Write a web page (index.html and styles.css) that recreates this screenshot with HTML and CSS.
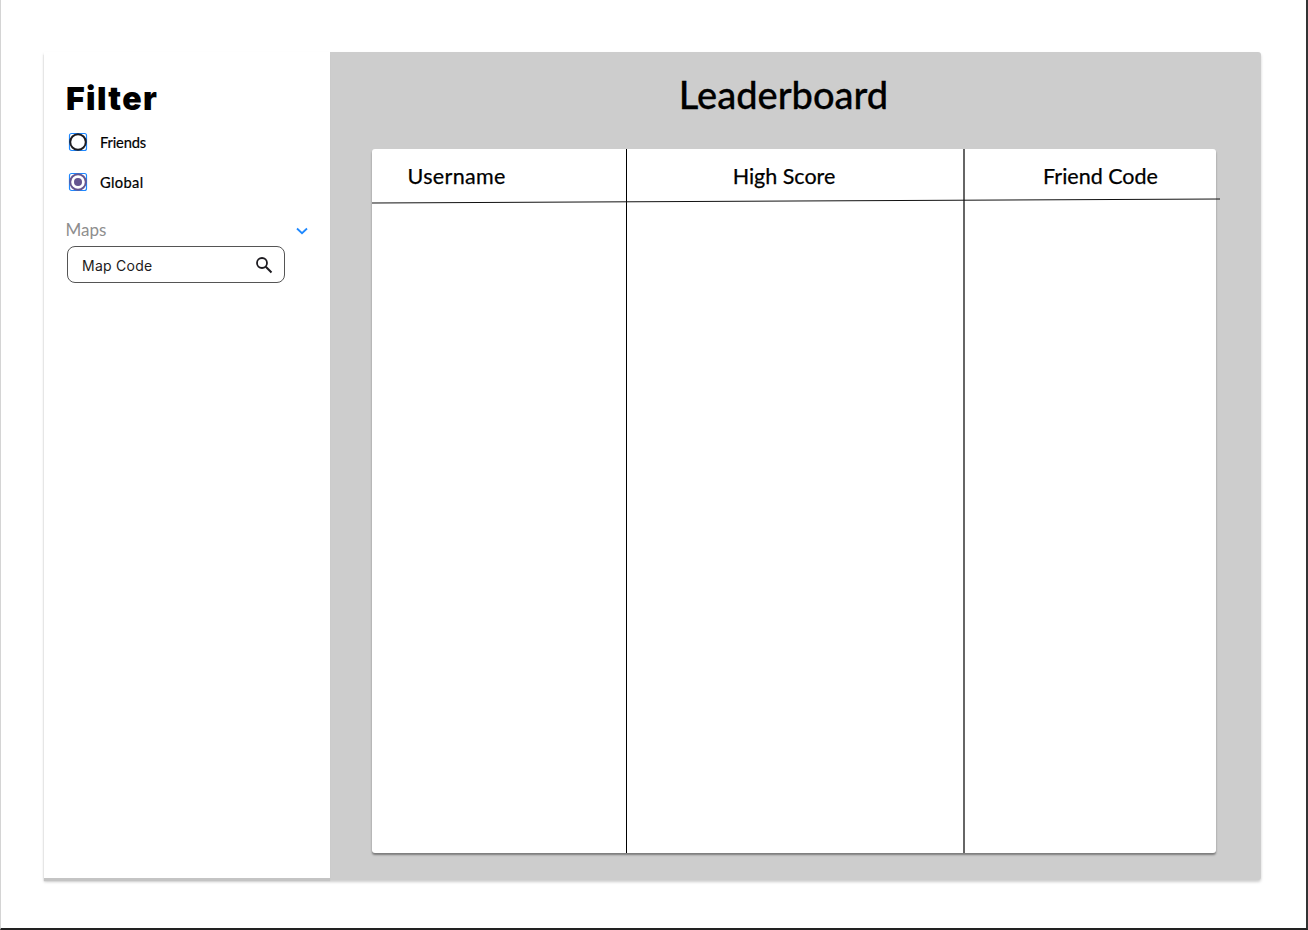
FILE: index.html
```html
<!DOCTYPE html>
<html lang="en">
<head>
  <meta charset="UTF-8" />
  <meta name="viewport" content="width=device-width, initial-scale=1.0"/>
  <title>Leaderboard</title>
  <link rel="stylesheet" href="styles.css">
</head>
<body>
  <div class="frame">
    <div class="board">
      <aside class="sidebar">
        <h2 class="filter-title">Filter</h2>

        <div class="radio-row">
          <svg class="radio" width="20" height="20" viewBox="0 0 20 20">
            <rect x="1.5" y="1.5" width="17" height="17" rx="2" fill="none" stroke="#1e88ff" stroke-width="1.2"/>
            <circle cx="10" cy="10" r="7.8" fill="#fff" stroke="#1d1b20" stroke-width="2"/>
          </svg>
          <span class="radio-friends">Friends</span>
        </div>
        <div class="radio-row">
          <svg class="radio" width="20" height="20" viewBox="0 0 20 20">
            <rect x="1.5" y="1.5" width="17" height="17" rx="2" fill="none" stroke="#1e88ff" stroke-width="1.2"/>
            <circle cx="10" cy="10" r="7.8" fill="#fff" stroke="#65558f" stroke-width="2"/>
            <circle cx="10" cy="10" r="4" fill="#65558f"/>
          </svg>
          <span class="radio-global">Global</span>
        </div>

        <div class="maps-head">
          <span class="maps-label">Maps</span>
          <svg class="maps-arrow" width="14" height="8" viewBox="0 0 14 8">
            <path d="M2 1.5 L7 6.2 L12 1.5" fill="none" stroke="#1e88ff" stroke-width="1.8"/>
          </svg>
        </div>
        <div class="search-box">
          <span>Map Code</span>
          <svg width="20" height="20" viewBox="0 0 20 20">
            <circle cx="8" cy="8" r="5" fill="none" stroke="#1d1b20" stroke-width="1.8"/>
            <path d="M11.8 11.8 L17.5 17.5" fill="none" stroke="#1d1b20" stroke-width="2"/>
          </svg>
        </div>
      </aside>

      <main class="content">
        <h1 class="title">Leaderboard</h1>
        <div class="table">
          <div class="col col-user">
            <div class="col-head">Username</div>
          </div>
          <div class="col col-score">
            <div class="col-head">High Score</div>
          </div>
          <div class="col col-code">
            <div class="col-head">Friend Code</div>
          </div>
          <!-- hand drawn header rule, not quite level -->
          <svg class="head-rule" width="848" height="6" viewBox="0 0 848 6">
            <path d="M0 5 L848 1" stroke="#111" stroke-width="1" fill="none"/>
          </svg>
        </div>
      </main>
    </div>
  </div>
</body>
</html>
```

FILE: styles.css
```css
html, body {
  margin: 0;
  height: 100%;
}
body {
  background: #fff;
  font-family: "Lato", Arial, sans-serif;
  color: #000;
  overflow: hidden;
}
.frame {
  box-sizing: border-box;
  width: 1308px;
  height: 930px;
  padding: 52px 45px 0 43px;
  border-left: 1px solid #d4d4d4;
  border-right: 2px solid #333;
  border-bottom: 2px solid #222;
}
.board {
  display: flex;
  width: 1217px;
  height: 828px;
  background: #cdcdcd;
  border-radius: 0 3px 3px 0;
  box-shadow: 0 2px 3px rgba(0, 0, 0, 0.2);
}
.sidebar {
  box-sizing: border-box;
  width: 286px;
  height: 826px;
  padding: 28px 22px 0;
  background: #fff;
  box-shadow: 0 3px 1px #c4c4c4;
}
.filter-title {
  margin: 0 0 14px;
  font-family: "Inter", Arial, sans-serif;
  font-size: 32px;
  font-weight: 900;
  line-height: 38px;
  letter-spacing: 1.4px;
}
.radio-row {
  display: flex;
  align-items: center;
  gap: 12px;
  height: 20px;
  margin: 0 0 20px 2px;
  font-size: 14.7px;
  -webkit-text-stroke: 0.2px #000;
}
.radio-friends {
  letter-spacing: -0.15px;
}
.radio-global {
  letter-spacing: 0.35px;
}
.maps-head {
  display: flex;
  justify-content: space-between;
  align-items: center;
  width: 243px;
  margin-top: 28px;
  font-size: 17px;
  line-height: 20px;
  color: #8e8e8e;
}
.maps-label {
  margin-left: -0.5px;
}
.maps-arrow {
  margin-top: 2px;
}
.search-box {
  display: flex;
  justify-content: space-between;
  align-items: center;
  box-sizing: border-box;
  width: 218px;
  height: 37px;
  margin: 6px 0 0 1px;
  padding: 0 10px 0 14px;
  border: 1px solid #555;
  border-radius: 8px;
  font-family: "Inter", Arial, sans-serif;
  font-size: 14px;
  letter-spacing: 0.25px;
  color: #1d1b20;
}
.search-box span {
  padding-top: 1px;
}
.content {
  flex: 1;
  padding: 0 45px 0 42px;
}
.title {
  margin: 0;
  padding: 19px 21px 0 0;
  height: 76px;
  box-sizing: border-box;
  text-align: center;
  font-size: 38px;
  font-weight: 500;
  line-height: 46px;
  -webkit-text-stroke: 0.3px #000;
}
.table {
  position: relative;
  display: flex;
  height: 704px;
  margin-top: 21px;
  background: #fff;
  border-radius: 3px;
  box-shadow: 0 2px 2px rgba(0, 0, 0, 0.4);
}
.col-user {
  width: 254px;
  border-right: 1px solid #000;
}
.col-score {
  width: 336px;
  border-right: 2px solid #666;
}
.col-code {
  flex: 1;
}
.col-head {
  height: 50px;
  font-size: 21.5px;
  line-height: 54px;
  text-align: center;
  -webkit-text-stroke: 0.25px #000;
}
.col-user .col-head {
  padding-left: 35.5px;
  text-align: left;
  letter-spacing: 0.35px;
}
.col-score .col-head {
  padding-right: 22px;
}
.col-code .col-head {
  padding-left: 20px;
}
.head-rule {
  position: absolute;
  left: 0;
  top: 49px;
}
```
